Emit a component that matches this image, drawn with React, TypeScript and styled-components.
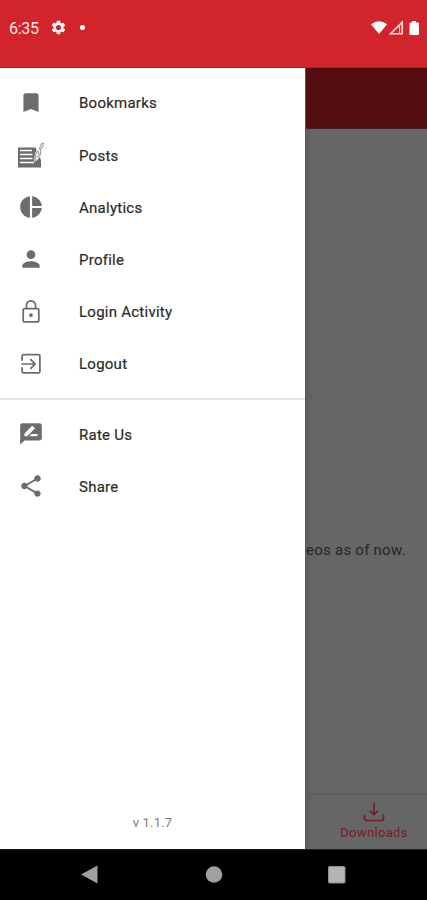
import React from "react";
import styled, { createGlobalStyle } from "styled-components";

const Global = createGlobalStyle`
  * { box-sizing: border-box; }
  body { margin: 0; font-family: Roboto, "Liberation Sans", sans-serif; }
`;

const Screen = styled.div`
  width: 427px;
  height: 900px;
  display: flex;
  flex-direction: column;
  overflow: hidden;
  background: #000;
`;

const StatusBar = styled.header`
  height: 68px;
  flex: none;
  display: flex;
  justify-content: space-between;
  padding: 18px 7px 0 9px;
  background: #d2242b;
  border-bottom: 1px solid #c4161d;
  color: #fff;
`;

const StatusGroup = styled.div`
  display: flex;
  align-items: center;
  height: 19px;
`;

const Clock = styled.span`
  width: 41px;
  padding-top: 1px;
  font-size: 16px;
  letter-spacing: -0.3px;
  color: #ffe9e8;
  white-space: nowrap;
`;

const Dot = styled.i`
  width: 5px;
  height: 5px;
  margin-left: 13px;
  border-radius: 50%;
  background: #fff;
`;

const Body = styled.div`
  height: 781px;
  flex: none;
  display: flex;
`;

const Drawer = styled.nav`
  width: 305px;
  flex: none;
  display: flex;
  flex-direction: column;
  background: #fff;
  padding-top: 9px;
`;

const Section = styled.ul`
  list-style: none;
  margin: 0;
  padding: 0;
`;

const Item = styled.li`
  height: 52.15px;
  display: flex;
  align-items: center;
  padding-left: 18px;
  gap: 35px;
  color: #6c6c6c;
`;

const Label = styled.span`
  padding-top: 0.6px;
  font-size: 15px;
  font-weight: 400;
  letter-spacing: 0.25px;
  -webkit-text-stroke: 0.2px #2c2c2c;
  color: #2c2c2c;
  white-space: nowrap;
`;

const Divider = styled.hr`
  width: 100%;
  height: 2px;
  flex: none;
  margin: 8px 0 8.4px;
  border: 0;
  background: #e5e5e5;
`;

const Version = styled.div`
  margin-top: auto;
  padding-bottom: 17px;
  text-align: center;
  font-size: 13px;
  line-height: 18px;
  letter-spacing: 0.2px;
  color: #808080;
`;

const Page = styled.main`
  flex: 1;
  display: flex;
  flex-direction: column;
  border-left: 1px solid #585858;
  background: linear-gradient(90deg, #5d5d5d, #666 7px);
`;

const AppBar = styled.div`
  height: 61px;
  flex: none;
  background: #520e11;
  border-bottom: 1px solid #4c2022;
`;

const Content = styled.div`
  flex: 1;
  padding-top: 411px;
  overflow: hidden;
`;

const Message = styled.p`
  margin: 0;
  font-size: 15px;
  line-height: 20px;
  letter-spacing: 0.25px;
  color: #252525;
  white-space: nowrap;
`;

const BottomTabs = styled.div`
  height: 56px;
  flex: none;
  border-top: 2px solid #5e5e5e;
  padding: 6px 0 0 15px;
`;

const Tab = styled.div`
  display: flex;
  flex-direction: column;
  align-items: center;
  color: #721d26;
  font-size: 13px;
  line-height: 16px;
  letter-spacing: 0.35px;
`;

const SystemNav = styled.footer`
  height: 51px;
  flex: none;
  border-top: 1px solid #202020;
  display: flex;
  align-items: center;
  padding-left: 80px;
  gap: 105px;
  background: #000;
  color: #a0a0a0;
`;

const MaterialIcon = ({ d }: { d: string }) => (
  <svg width="26" height="26" viewBox="0 0 24 24" fill="currentColor">
    <path d={d} />
  </svg>
);

const PostsIcon = () => (
  <svg width="26" height="26" viewBox="0 0 26 26">
    <path d="M0 5.500h17.500L23 18v7.500H0z" fill="currentColor" />
    <path d="M2 8.500H14M2 12.500H14.500M2 16.500H14.500M2 20.500H16" stroke="#fff" strokeWidth="1.3" />
    <path d="M16 20l1-9 5.500-8 3 1-2 8-4 6z" fill="#f4f4f4" />
    <path
      d="M17 19.500l1-3M18 16l-.5-4 2.500-3 1 2.500M19 15l3-1.500 1-4-1.500-3 2-5 2-.5-1 4-2.500 3M19.500 11.500l2 1"
      fill="none"
      stroke="#929292"
      strokeWidth="1"
    />
  </svg>
);

const paths = {
  bookmark: "M17 3H7c-1.1 0-1.99.9-1.99 2v15.300L12 17.500l7 2.800V5c0-1.1-.9-2-2-2z",
  pie: "M11 2v20c-5.07-.5-9-4.79-9-10s3.93-9.5 9-10zm2.03 0v8.99H22c-.47-4.74-4.24-8.52-8.97-8.99zm0 11.01V22c4.74-.47 8.5-4.25 8.97-8.99h-8.97z",
  person:
    "M12 12c2.21 0 4-1.79 4-4s-1.79-4-4-4-4 1.79-4 4 1.79 4 4 4zm0 2c-2.67 0-8 1.34-8 4v2h16v-2c0-2.66-5.33-4-8-4z",
  lock: "M12 16.6a1.7 1.7 0 100-3.4 1.7 1.7 0 000 3.4zM18 8h-1V6c0-2.76-2.24-5-5-5S7 3.24 7 6v2H6c-1.1 0-2 .9-2 2v10c0 1.1.9 2 2 2h12c1.1 0 2-.9 2-2V10c0-1.1-.9-2-2-2zM8.6 6c0-1.9 1.5-3.4 3.4-3.4s3.4 1.5 3.4 3.4v2H8.6V6zM18.4 20.4H5.6V9.6h12.8v10.8z",
  exit: "M10.8 15.9l1.1 1.1 5-5-5-5-1.1 1.1 3.1 3.1H3v1.6h10.9l-3.1 3.1zM19 2.500H5a2 2 0 00-2 2V9h1.6V4.1h14.8v15.300H4.6V15H3v4a2 2 0 002 2h14c1.1 0 2-.9 2-2V4.500c0-1.1-.9-2-2-2z",
  rate: "M20 2H4c-1.1 0-1.99.9-1.99 2L2 22l4-4h14c1.1 0 2-.9 2-2V4c0-1.1-.9-2-2-2zM6 14v-2.47l6.88-6.88c.2-.2.51-.2.71 0l1.77 1.77c.2.2.2.51 0 .71L8.47 14H6zm12 0h-7.5l2-2H18v2z",
  share:
    "M18 16.08c-.76 0-1.44.3-1.96.77L8.91 12.7c.05-.23.09-.46.09-.7s-.04-.47-.09-.7l7.05-4.11c.54.5 1.25.81 2.04.81 1.66 0 3-1.34 3-3s-1.34-3-3-3-3 1.34-3 3c0 .24.04.47.09.7L8.04 9.81C7.5 9.31 6.79 9 6 9c-1.66 0-3 1.34-3 3s1.34 3 3 3c.79 0 1.5-.31 2.04-.81l7.12 4.16c-.05.21-.08.43-.08.65 0 1.61 1.31 2.92 2.92 2.92s2.92-1.31 2.92-2.92-1.31-2.92-2.92-2.92z",
  gear: "M19.14 12.94c.04-.3.06-.61.06-.94s-.02-.64-.07-.94l2.03-1.58a.5.5 0 00.12-.61l-1.92-3.32a.49.49 0 00-.59-.22l-2.39.96a7 7 0 00-1.62-.94l-.36-2.54a.48.48 0 00-.48-.41h-3.84a.47.47 0 00-.47.41l-.36 2.54a7.2 7.2 0 00-1.62.94l-2.39-.96a.48.48 0 00-.59.22L2.74 8.87a.47.47 0 00.12.61l2.03 1.58a6 6 0 000 1.88l-2.03 1.58a.5.5 0 00-.12.61l1.92 3.32c.12.22.37.29.59.22l2.39-.96c.5.38 1.03.7 1.62.94l.36 2.54c.05.24.24.41.48.41h3.84c.24 0 .44-.17.47-.41l.36-2.54a7.2 7.2 0 001.62-.94l2.39.96c.22.08.47 0 .59-.22l1.92-3.32a.47.47 0 00-.12-.61l-2.01-1.58zM12 15.6A3.6 3.6 0 1112 8.4a3.6 3.6 0 010 7.2z",
};

const accountItems = [
  { label: "Bookmarks", icon: <MaterialIcon d={paths.bookmark} /> },
  { label: "Posts", icon: <PostsIcon /> },
  { label: "Analytics", icon: <MaterialIcon d={paths.pie} /> },
  { label: "Profile", icon: <MaterialIcon d={paths.person} /> },
  { label: "Login Activity", icon: <MaterialIcon d={paths.lock} /> },
  { label: "Logout", icon: <MaterialIcon d={paths.exit} /> },
];

const appItems = [
  { label: "Rate Us", icon: <MaterialIcon d={paths.rate} /> },
  { label: "Share", icon: <MaterialIcon d={paths.share} /> },
];

const Menu = ({ items }: { items: typeof accountItems }) => (
  <Section>
    {items.map(({ label, icon }) => (
      <Item key={label}>
        {icon}
        <Label>{label}</Label>
      </Item>
    ))}
  </Section>
);

export default function App() {
  return (
    <>
      <Global />
      <Screen>
        <StatusBar>
          <StatusGroup>
            <Clock>6:35</Clock>
            <svg width="17" height="17" viewBox="0 0 24 24" fill="#fff">
              <path d={paths.gear} />
            </svg>
            <Dot />
          </StatusGroup>
          <StatusGroup>
            <svg width="50" height="16" viewBox="0 0 50 16" fill="#fff">
              <path d="M1 4.2Q9 -1.6 17 4.2L9 14z" />
              <path d="M20.5 13.8L32.2 2.2v11.6z" fill="none" stroke="#ffdcdc" strokeWidth="1.6" />
              <path d="M29.5 6v7.500" stroke="#ffc4c4" strokeWidth="1.2" />
              <path d="M42 1h4v1.5h2a1 1 0 011 1V14a1 1 0 01-1 1h-7.500a1 1 0 01-1-1V3.500a1 1 0 011-1H42z" />
            </svg>
          </StatusGroup>
        </StatusBar>
        <Body>
          <Drawer>
            <Menu items={accountItems} />
            <Divider />
            <Menu items={appItems} />
            <Version>v 1.1.7</Version>
          </Drawer>
          <Page>
            <AppBar />
            <Content>
              <Message>eos as of now.</Message>
            </Content>
            <BottomTabs>
              <Tab>
                <svg width="22" height="24" viewBox="0 0 22 24" fill="none" stroke="currentColor" strokeWidth="1.7">
                  <path d="M11 1.500v12M7 9.800l4 3.700 4-3.700M1.500 13.500V17a2.500 2.500 0 002.500 2.500h14a2.500 2.500 0 002.500-2.500v-3.500" />
                </svg>
                Downloads
              </Tab>
            </BottomTabs>
          </Page>
        </Body>
        <SystemNav>
          <svg width="20" height="20" viewBox="0 0 20 20" fill="currentColor">
            <path d="M1 9.500L17.500 .5v18z" />
          </svg>
          <svg width="18" height="18" viewBox="0 0 18 18" fill="currentColor">
            <circle cx="9" cy="8.500" r="8.300" />
          </svg>
          <svg width="18" height="18" viewBox="0 0 18 18">
            <rect x="0.500" y="0.500" width="16.500" height="16.500" rx="1" fill="#b4b4b4" stroke="#8c8c8c" />
          </svg>
        </SystemNav>
      </Screen>
    </>
  );
}
